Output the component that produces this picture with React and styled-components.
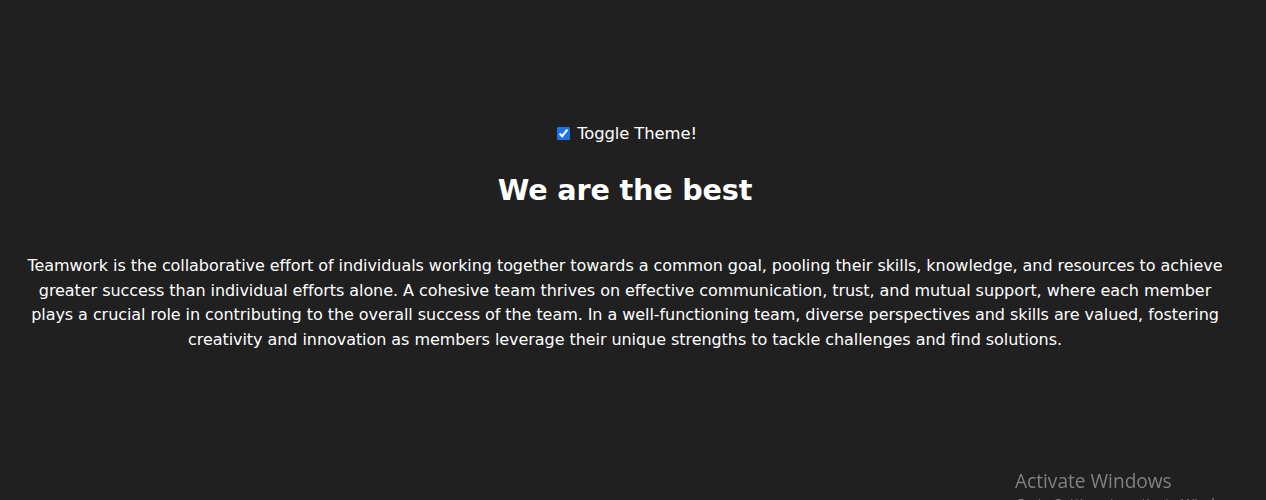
import React, { useState } from "react";
import styled, { createGlobalStyle } from "styled-components";

const Global = createGlobalStyle`
  html, body { background: #202020; }
  body {
    margin: 8px;
    font-family: "DejaVu Sans", "Noto Sans", sans-serif;
    color: #ffffff;
  }
`;

const Page = styled.main`
  display: flex;
  flex-direction: column;
  align-items: center;
  text-align: center;
  padding: 113px 16px 0 0;
`;

const ToggleLabel = styled.label`
  display: flex;
  align-items: center;
  gap: 7px;
  height: 24px;
  margin-left: 4px;
  font-size: 16.4px;
  letter-spacing: -0.1px;
  color: #ffffff;
  cursor: pointer;
`;

const Check = styled.input`
  width: 13px;
  height: 13px;
  margin: 0;
  accent-color: #1a73e8;
`;

const Title = styled.h1`
  margin: 21px 0 0;
  height: 48px;
  line-height: 48px;
  font-size: 28.7px;
  font-weight: 700;
  letter-spacing: -0.2px;
  color: #ffffff;
`;

const Text = styled.p`
  max-width: 1208px;
  margin: 40px 0 0;
  padding: 0;
  font-size: 16px;
  line-height: 24.7px;
  letter-spacing: -0.06px;
  color: #ffffff;
`;

const Watermark = styled.div`
  position: fixed;
  left: 1015px;
  top: 468px;
  font-family: "Open Sans", "Noto Sans", sans-serif;
  color: #808080;
  font-size: 19.1px;
  line-height: 26px;
  text-align: left;
  white-space: nowrap;
  pointer-events: none;
`;

const WatermarkSub = styled.div`
  font-size: 14px;
  line-height: 20px;
`;

export default function App() {
  const [dark, setDark] = useState(true);
  return (
    <>
      <Global />
      <Page>
        <ToggleLabel>
          <Check type="checkbox" checked={dark} onChange={() => setDark(!dark)} />
          Toggle Theme!
        </ToggleLabel>
        <Title>We are the best</Title>
        <Text>
          Teamwork is the collaborative effort of individuals working together towards a common goal, pooling their skills, knowledge, and resources to achieve greater success than individual efforts alone. A cohesive team thrives on effective communication, trust, and mutual support, where each member plays a crucial role in contributing to the overall success of the team. In a well-functioning team, diverse perspectives and skills are valued, fostering creativity and innovation as members leverage their unique strengths to tackle challenges and find solutions.
        </Text>
      </Page>
      <Watermark>
        Activate Windows
        <WatermarkSub>Go to Settings to activate Windows.</WatermarkSub>
      </Watermark>
    </>
  );
}
